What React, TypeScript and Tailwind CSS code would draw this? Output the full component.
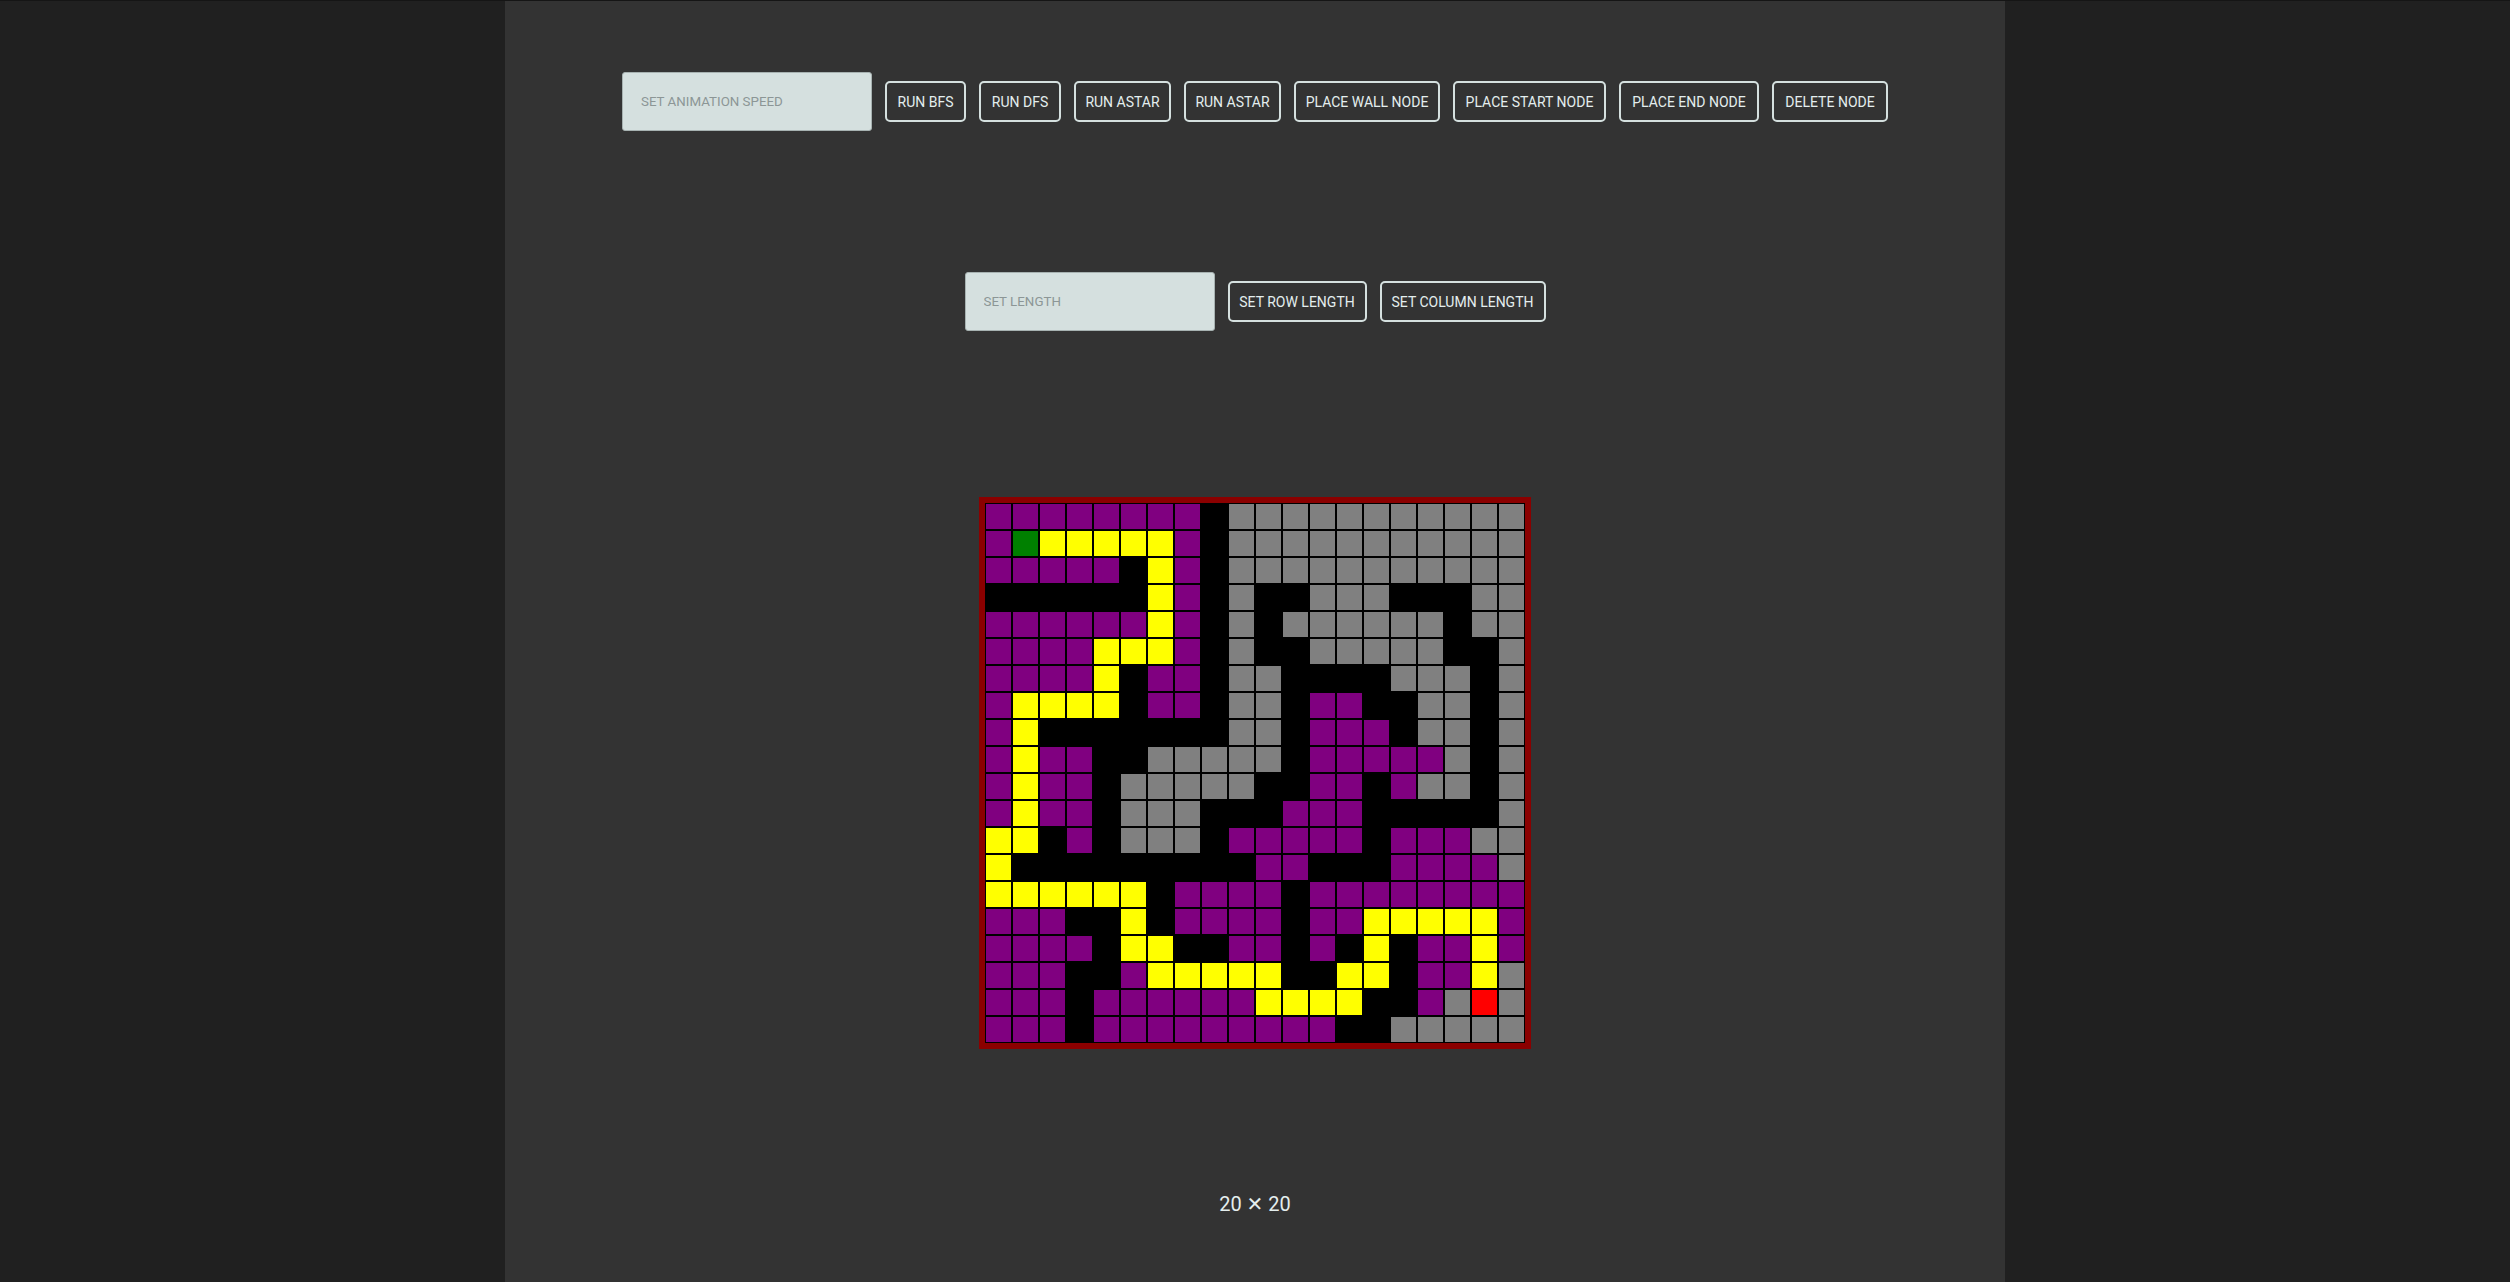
import React from "react";

const GRID = [
  "PPPPPPPPWGGGGGGGGGGG",
  "PSYYYYYPWGGGGGGGGGGG",
  "PPPPPWYPWGGGGGGGGGGG",
  "WWWWWWYPWGWWGGGWWWGG",
  "PPPPPPYPWGWGGGGGGWGG",
  "PPPPYYYPWGWWGGGGGWWG",
  "PPPPYWPPWGGWWWWGGGWG",
  "PYYYYWPPWGGWPPWWGGWG",
  "PYWWWWWWWGGWPPPWGGWG",
  "PYPPWWGGGGGWPPPPPGWG",
  "PYPPWGGGGGWWPPWPGGWG",
  "PYPPWGGGWWWPPPWWWWWG",
  "YYWPWGGGWPPPPPWPPPGG",
  "YWWWWWWWWWPPWWWPPPPG",
  "YYYYYYWPPPPWPPPPPPPP",
  "PPPWWYWPPPPWPPYYYYYP",
  "PPPPWYYWWPPWPWYWPPYP",
  "PPPWWPYYYYYWWYYWPPYG",
  "PPPWPPPPPPYYYYWWPGEG",
  "PPPWPPPPPPPPPWWGGGGG",
];

const cellClass: Record<string, string> = {
  P: "bg-[#800080]",
  Y: "bg-[#ffff00]",
  S: "bg-[#008000]",
  E: "bg-[#ff0000]",
  W: "bg-[#000000]",
  G: "bg-[#808080]",
};

const font = { fontFamily: "Roboto, 'Liberation Sans', sans-serif" };

function Btn({ label, w }: { label: string; w: string }) {
  return (
    <button
      className={`${w} h-[41px] shrink-0 rounded-[5px] border-2 border-[#d5e0df] bg-transparent text-[14px] leading-none text-[#e4eeee] whitespace-nowrap flex items-center justify-center`}
    >
      {label}
    </button>
  );
}

function Field({ placeholder }: { placeholder: string }) {
  return (
    <input
      placeholder={placeholder}
      className="w-[250px] h-[59px] shrink-0 rounded-[3px] border border-[#a7b2b1] bg-[#d5e0df] pl-[18px] text-[13.33px] text-[#333] outline-none placeholder:text-[#8c9696]"
    />
  );
}

export default function App() {
  return (
    <div className="min-h-[1282px] w-full bg-[#202020] border-t border-[#151515]" style={font}>
      <div className="mx-auto w-[1500px] min-h-[1281px] bg-[#333333] flex flex-col items-center pt-[71px]">
        <div className="flex items-center gap-[13px]">
          <Field placeholder="SET ANIMATION SPEED" />
          <Btn label="RUN BFS" w="w-[81px]" />
          <Btn label="RUN DFS" w="w-[82px]" />
          <Btn label="RUN ASTAR" w="w-[97px]" />
          <Btn label="RUN ASTAR" w="w-[97px]" />
          <Btn label="PLACE WALL NODE" w="w-[146px]" />
          <Btn label="PLACE START NODE" w="w-[153px]" />
          <Btn label="PLACE END NODE" w="w-[140px]" />
          <Btn label="DELETE NODE" w="w-[116px]" />
        </div>

        <div className="mt-[141px] flex items-center gap-[13px]">
          <Field placeholder="SET LENGTH" />
          <Btn label="SET ROW LENGTH" w="w-[139px]" />
          <Btn label="SET COLUMN LENGTH" w="w-[166px]" />
        </div>

        <div className="mt-[166px] border-[6px] border-[#8b0000] bg-black">
          {GRID.map((row, r) => (
            <div key={r} className="flex">
              {row.split("").map((c, ci) => (
                <div
                  key={ci}
                  className={`w-[27px] h-[27px] border border-black ${cellClass[c]}`}
                />
              ))}
            </div>
          ))}
        </div>

        <div className="mt-[143px] text-[20px] leading-[24px] text-[#e4eeee]">
          20 <span style={{ fontFamily: "'DejaVu Sans', sans-serif" }}>✕</span> 20
        </div>
      </div>
    </div>
  );
}
